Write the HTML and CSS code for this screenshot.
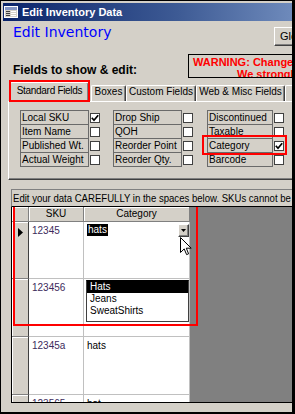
FILE: index.html
```html
<!DOCTYPE html>
<html>
<head>
<meta charset="utf-8">
<link rel="stylesheet" href="styles.css">
</head>
<body>
<div class="window">
  <div class="titlebar">
    <svg class="app-icon" width="14" height="12" viewBox="0 0 14 12">
      <rect x="0.5" y="0.5" width="13" height="11" fill="#d4d0c8" stroke="#ffffff"/>
      <rect x="1" y="1" width="12" height="3" fill="#8496c4"/>
      <rect x="2" y="5" width="4" height="1" fill="#404040"/>
      <rect x="7" y="5" width="5" height="1" fill="#ffffff"/>
      <rect x="2" y="7" width="4" height="1" fill="#404040"/>
      <rect x="7" y="7" width="5" height="1" fill="#ffffff"/>
      <rect x="2" y="9" width="4" height="1" fill="#404040"/>
      <rect x="7" y="9" width="5" height="1" fill="#ffffff"/>
    </svg>
    <span class="title">Edit Inventory Data</span>
  </div>
  <div class="client">
    <div class="header">
      <div class="heads">
        <div class="form-title">Edit Inventory</div>
        <div class="section-title">Fields to show &amp; edit:</div>
      </div>
      <div class="side">
        <div class="btn">Global Changes</div>
        <div class="warning">
          <div>WARNING: Changes made here are permanent!</div>
          <div class="l2">We strongly recommend a backup first.</div>
        </div>
      </div>
    </div>

    <div class="tabs">
      <div class="tab active">Standard Fields</div>
      <div class="tab t-boxes">Boxes</div>
      <div class="tab t-custom">Custom Fields</div>
      <div class="tab t-web">Web &amp; Misc Fields</div>
      <div class="tab t-more">Vendor</div>
    </div>

    <div class="panel">
      <div class="fields c1">
        <div class="field"><div class="lbl">Local SKU</div><div class="cb"><svg width="8" height="8" viewBox="0 0 8 8"><polyline points="0.8,3.8 3,6.3 7.2,1.2" fill="none" stroke="#000" stroke-width="1.7"/></svg></div></div>
        <div class="field"><div class="lbl">Item Name</div><div class="cb"></div></div>
        <div class="field"><div class="lbl">Published Wt.</div><div class="cb"></div></div>
        <div class="field"><div class="lbl">Actual Weight</div><div class="cb"></div></div>
      </div>
      <div class="fields c2">
        <div class="field"><div class="lbl">Drop Ship</div><div class="cb"></div></div>
        <div class="field"><div class="lbl">QOH</div><div class="cb"></div></div>
        <div class="field"><div class="lbl">Reorder Point</div><div class="cb"></div></div>
        <div class="field"><div class="lbl">Reorder Qty.</div><div class="cb"></div></div>
      </div>
      <div class="fields c3">
        <div class="field"><div class="lbl">Discontinued</div><div class="cb"></div></div>
        <div class="field"><div class="lbl">Taxable</div><div class="cb"></div></div>
        <div class="field"><div class="lbl">Category</div><div class="cb"><svg width="8" height="8" viewBox="0 0 8 8"><polyline points="0.8,3.8 3,6.3 7.2,1.2" fill="none" stroke="#000" stroke-width="1.7"/></svg></div></div>
        <div class="field"><div class="lbl">Barcode</div><div class="cb"></div></div>
      </div>
    </div>

    <div class="note"><span class="note-text">Edit your data CAREFULLY in the spaces below. SKUs cannot be changed here.</span></div>

    <div class="sheet">
      <div class="grid">
        <div class="hcell"></div>
        <div class="hcell">SKU</div>
        <div class="hcell">Category</div>

        <div class="sel"><svg width="5" height="9" viewBox="0 0 5 9"><polygon points="0,0 5,4.5 0,9" fill="#000"/></svg></div>
        <div class="cell sku">12345</div>
        <div class="cell cat active-cell"><span class="hl">hats</span><span class="ddbtn"><svg width="5" height="3" viewBox="0 0 5 3"><polygon points="0,0 5,0 2.5,3" fill="#000"/></svg></span></div>

        <div class="sel"></div>
        <div class="cell sku">123456</div>
        <div class="cell cat"></div>

        <div class="sel"></div>
        <div class="cell sku">12345a</div>
        <div class="cell cat">hats</div>

        <div class="sel"></div>
        <div class="cell sku">123565</div>
        <div class="cell cat">hat</div>
      </div>

      <div class="dropdown">
        <div class="opt on">Hats</div>
        <div class="opt">Jeans</div>
        <div class="opt">SweatShirts</div>
      </div>

      <svg class="cursor" width="12" height="19" viewBox="0 0 12 19">
        <path d="M0.5,0.5 L0.5,15.5 L4.2,11.9 L6.6,17.6 L8.6,16.8 L6.3,11.2 L11.2,11.2 Z" fill="#ffffff" stroke="#000" stroke-width="1"/>
      </svg>
      <div class="mark mark-sheet"></div>
    </div>

    <div class="mark mark-tab"></div>
    <div class="mark mark-cat"></div>
  </div>
</div>
</body>
</html>
```

FILE: styles.css
```css
* { box-sizing: border-box; margin: 0; padding: 0; }

html, body {
  width: 295px;
  height: 414px;
  overflow: hidden;
  background: #d4d0c8;
}

body {
  font-family: "Liberation Sans", Arial, sans-serif;
  font-size: 10px;
  color: #000;
}

.window {
  width: 295px;
  height: 414px;
  border-style: solid;
  border-color: #000;
  border-width: 1px 3px 2px 1px;
  padding: 2px 0 0 2px;
  display: flex;
  flex-direction: column;
  overflow: hidden;
  background: #d4d0c8;
}

/* title bar */
.titlebar {
  height: 18px;
  flex: none;
  display: flex;
  align-items: center;
  gap: 4px;
  padding-left: 1px;
  background: linear-gradient(90deg, #0a246a 0%, #3d5a94 60%, #6e8abb 100%);
  color: #fff;
  font-weight: bold;
  font-size: 11px;
  white-space: nowrap;
}

.app-icon { flex: none; }

/* client area */
.client {
  position: relative;
  flex: 1;
  overflow: hidden;
  display: flex;
  flex-direction: column;
}

.header {
  height: 57px;
  flex: none;
  display: flex;
}

.heads {
  flex: 0 0 185px;
  padding-left: 10px;
}

.form-title {
  margin-top: 3px;
  font-family: "DejaVu Sans", sans-serif;
  font-size: 14px;
  line-height: 17px;
  color: #0000ff;
  white-space: nowrap;
}

.section-title {
  margin-top: 22px;
  font-weight: bold;
  font-size: 12px;
  line-height: 14px;
  white-space: nowrap;
}

.side {
  flex: none;
  display: flex;
  flex-direction: column;
  align-items: flex-start;
}

.btn {
  margin: 6px 0 0 86px;
  width: 80px;
  height: 20px;
  border: 1px solid;
  border-color: #fff #404040 #404040 #fff;
  box-shadow: inset -1px -1px #808080;
  font-size: 11px;
  line-height: 17px;
  padding-left: 5px;
  white-space: nowrap;
  overflow: hidden;
}

.warning {
  margin-top: 8px;
  width: 160px;
  height: 25px;
  border: 1px solid #000;
  padding: 1px 0 0 4px;
  color: #ff0000;
  font-weight: bold;
  font-size: 11px;
  line-height: 12px;
  white-space: nowrap;
  overflow: hidden;
}

.warning .l2 { padding-left: 44px; }

/* tabs */
.tabs {
  height: 19px;
  flex: none;
  margin-top: 4px;
  padding-left: 7px;
  display: flex;
  align-items: flex-end;
  white-space: nowrap;
}

.tab {
  flex: none;
  height: 16px;
  border-top: 1px solid #fff;
  border-left: 1px solid #fff;
  border-right: 1px solid #404040;
  box-shadow: inset -1px 0 #808080;
  border-radius: 2px 2px 0 0;
  display: flex;
  justify-content: center;
  font-size: 10px;
  line-height: 12px;
  background: #d4d0c8;
}

.tab.active {
  width: 79px;
  height: 20px;
  margin-bottom: -1px;
  padding-top: 2px;
  letter-spacing: -0.3px;
  position: relative;
  z-index: 1;
}

.t-boxes { width: 35px; margin-left: 2px; }
.t-custom { width: 70px; }
.t-web { width: 89px; }
.t-more { width: 60px; }

/* panel */
.panel {
  flex: none;
  margin-left: 5px;
  height: 79px;
  width: 320px;
  border-top: 1px solid #fff;
  border-left: 1px solid #fff;
  border-bottom: 1px solid #404040;
  box-shadow: inset 0 -1px #808080;
  padding: 8px 0 0 11px;
  display: flex;
}

.fields {
  display: flex;
  flex-direction: column;
}

.c2 { margin-left: 13px; }
.c3 { margin-left: 14px; }

.field {
  display: flex;
  align-items: center;
  height: 15px;
  margin-top: -1px;
}

.field:first-child { margin-top: 0; }

.lbl {
  width: 69px;
  height: 15px;
  border: 1px solid #6a6a6a;
  padding-left: 1px;
  font-size: 10px;
  line-height: 13px;
  white-space: nowrap;
  overflow: hidden;
}

.c3 .lbl { width: 66px; }

.cb {
  margin-left: 1px;
  width: 10px;
  height: 10px;
  background: #fff;
  border: 1px solid #404040;
  display: flex;
  align-items: center;
  justify-content: center;
}

/* note bar */
.note {
  flex: none;
  margin: 9px 0 0 8px;
  height: 18px;
  width: 330px;
  border-top: 1px solid #808080;
  border-left: 1px solid #808080;
  border-bottom: 1px solid #000;
  padding: 2px 0 0 1px;
  font-size: 11px;
  line-height: 13px;
  white-space: nowrap;
  overflow: hidden;
}

.note-text {
  display: inline-block;
  transform: scaleX(0.87);
  transform-origin: 0 50%;
}

/* datasheet */
.sheet {
  flex: none;
  position: relative;
  margin-left: 8px;
  height: 196px;
  background: #808080;
  border-left: 1px solid #000;
  border-bottom: 1px solid #000;
  overflow: hidden;
}

.grid {
  width: 178px;
  display: grid;
  grid-template-columns: 17px 55px 106px;
  grid-template-rows: 15px 57px 58px 58px 58px;
}

.hcell {
  background: #d4d0c8;
  border-right: 1px solid #808080;
  border-bottom: 1px solid #808080;
  box-shadow: inset 1px 1px #fff;
  text-align: center;
  font-size: 10px;
  line-height: 14px;
}

.sel {
  background: #d4d0c8;
  border-right: 1px solid #404040;
  border-bottom: 1px solid #808080;
  box-shadow: inset 1px 1px #fff;
  padding: 6px 0 0 6px;
}

.sel svg { display: block; }

.cell {
  background: #fff;
  border-right: 1px solid #c0c0c0;
  border-bottom: 1px solid #c0c0c0;
  padding: 3px 0 0 3px;
  font-size: 10px;
  line-height: 12px;
  white-space: nowrap;
}

.sku { color: #3c2a5c; padding-left: 3px; }

.active-cell {
  padding-top: 2px;
  display: flex;
  align-items: flex-start;
  justify-content: space-between;
}

.hl {
  background: #000;
  color: #fff;
  padding: 0 1px;
  line-height: 12px;
}

.ddbtn {
  width: 11px;
  height: 13px;
  background: #d4d0c8;
  border: 1px solid;
  border-color: #fff #404040 #404040 #fff;
  box-shadow: inset -1px -1px #808080;
  display: flex;
  align-items: center;
  justify-content: center;
}

.ddbtn svg { display: block; }

/* overlays */
.dropdown {
  position: absolute;
  left: 74px;
  top: 73px;
  width: 103px;
  height: 42px;
  background: #fff;
  border: 1px solid #404040;
  border-top-color: #000;
  font-size: 10px;
}

.opt {
  height: 12px;
  line-height: 12px;
  padding-left: 3px;
  white-space: nowrap;
}

.opt.on { background: #000; color: #fff; }

.cursor {
  position: absolute;
  left: 168px;
  top: 30px;
}

.mark {
  position: absolute;
  border: 2px solid #ff0000;
}

.mark-sheet {
  left: 1px;
  top: 0;
  width: 185px;
  height: 119px;
  border-top: 0;
}

.mark-tab {
  left: 6px;
  top: 59px;
  width: 81px;
  height: 22px;
  z-index: 2;
}

.mark-cat {
  left: 199px;
  top: 114px;
  width: 85px;
  height: 20px;
}
```
